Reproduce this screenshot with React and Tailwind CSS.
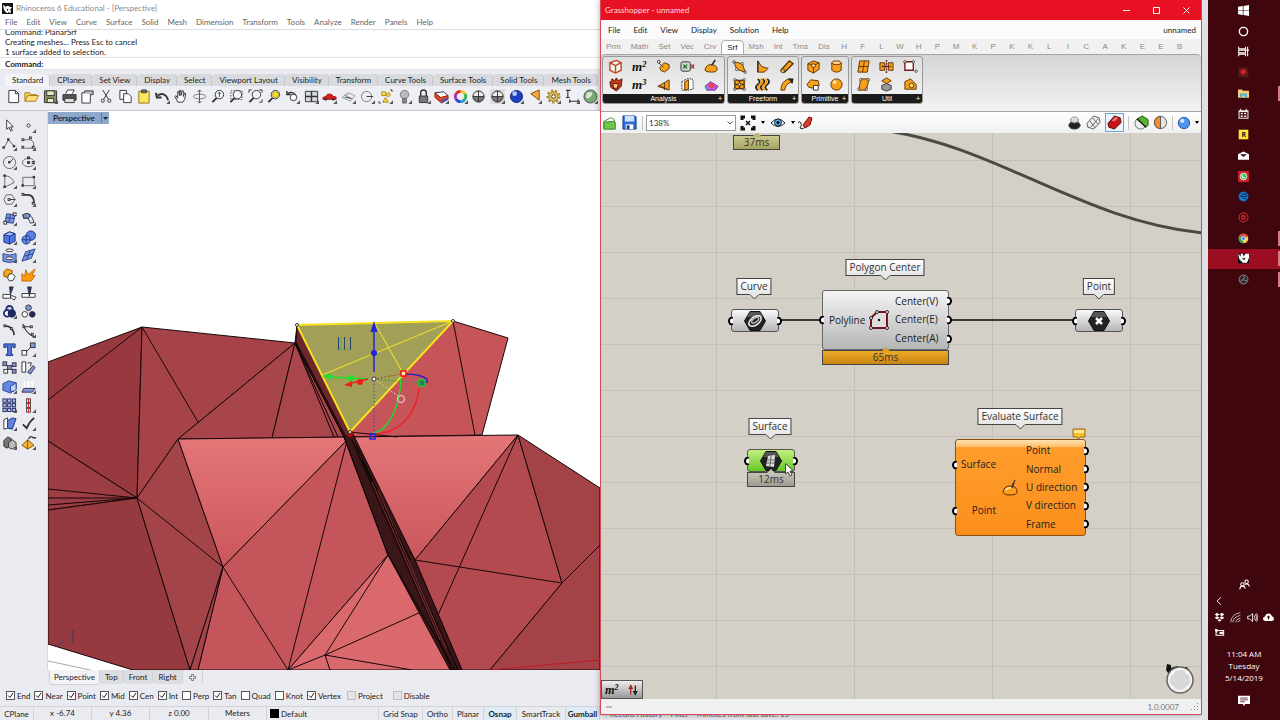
import React from "react";

function Ico({ children, size = "h-4 w-4", corner }) {
  return (
    <svg viewBox="0 0 16 16" className={`${size} shrink-0`} fill="none" stroke="#333" strokeWidth="1" aria-hidden="true">
      {children}
      {corner && <path d="M16 12v4h-4z" fill="#555" stroke="none" />}
    </svg>
  );
}

/* ---------- Rhino data ---------- */

const rhinoMenu = ["File", "Edit", "View", "Curve", "Surface", "Solid", "Mesh", "Dimension", "Transform", "Tools", "Analyze", "Render", "Panels", "Help"];

const rhinoTabs = ["Standard", "CPlanes", "Set View", "Display", "Select", "Viewport Layout", "Visibility", "Transform", "Curve Tools", "Surface Tools", "Solid Tools", "Mesh Tools"];

const lens = (
  <>
    <circle cx="9" cy="6" r="4.500" fill="#f4f6fa" />
    <path d="M6 9.500L1.500 14" strokeWidth="2" />
  </>
);

const standardTools = [
  ["New", <path d="M3 1.500h7l3.500 3.500v9.500H3zM10 1.500V5h3.500" fill="#fff" />],
  ["Open", <><path d="M1 13V4h5l1.500 2H13v2" fill="#f6cf4d" stroke="#a8741a" /><path d="M1 13l3-6h11.500l-3 6z" fill="#ffe07a" stroke="#a8741a" /></>],
  ["Save", <><path d="M1.500 2h13v12.500h-13z" fill="#8e9060" /><path d="M4 2h8v5H4zM4.500 10h7v4.500h-7z" fill="#e8e8c8" /></>, true],
  ["Print", <><path d="M4 5l2-4h7l-2 4" fill="#fff" /><path d="M1 6h14v6H1z" fill="#555" /><path d="M3 10h10v4.500H3z" fill="#ddd" /></>],
  ["Properties", <><path d="M2 4h9v11H2z" fill="#fff" /><path d="M5 4V2h9v4h-3" fill="#bbb" /></>],
  ["Cut", <><path d="M4 1l6 10M11 1L5 11" /><circle cx="4" cy="12.500" r="1.700" /><circle cx="11" cy="12.500" r="1.700" /></>],
  ["Copy", <><path d="M2 1.500h7V11H2z" fill="#fff" /><path d="M6 5h5l3 3v6.500H6z" fill="#fff" /></>],
  ["Paste", <><path d="M3 2.500h11v12.500H3z" fill="#ffe45c" stroke="#8a7614" /><path d="M6 1h5v3H6z" fill="#777" /></>],
  ["Undo", <path d="M14 12C12 5 7 4 3 7M1 4l1 5 5 0" strokeWidth="2" />, true],
  ["Pan", <path d="M5 14L2 8l1-1 2 3V3l1-1 1 5V1.500h1.500V7l1-5h1.500v6l1.500-4 1 1-1 6-2 3z" fill="#fff" />],
  ["Rotate view", <><ellipse cx="8" cy="8" rx="6.500" ry="2.500" stroke="#777" /><path d="M8 1v14M6 3l2-2 2 2M6 13l2 2 2-2" stroke="#555" /></>],
  ["Zoom dynamic", <>{lens}<path d="M9 3.500v5M7.500 5L9 3.500 10.500 5" stroke="#248" /></>],
  ["Zoom window", <><path d="M2 2h12v9H2z" strokeDasharray="1.500 1.500" />{lens}</>],
  ["Zoom extents", <>{lens}<path d="M1 4V1h3M12 1h3v3M15 11v3h-3" /></>],
  ["Zoom selected", <>{lens}<circle cx="9" cy="6" r="3" fill="#ffe11f" stroke="#b59c00" /></>],
  ["Undo view", <><path d="M12 8C10 3 6 3 3 5M2 2v4h4" strokeWidth="1.500" /><circle cx="9" cy="9" r="3.500" fill="#fff" /></>, true],
  ["Four views", <><path d="M1.500 2.500h13v11h-13z" fill="#d6d9dd" /><path d="M8 2.500v11M1.500 8h13" strokeWidth="1.500" /></>, true],
  ["Named view", <><path d="M1 9l3-1 2-2.500h4L12 8l3 .5V11H1z" fill="#d41f1f" stroke="#a51212" /><circle cx="4" cy="11" r="1" fill="#333" /><circle cx="12" cy="11" r="1" fill="#333" /></>, true],
  ["CPlane", <><path d="M1 9l6-5 8 3-5 6zM4 6.500l8 4M8 5l-5 5" stroke="#999" /><path d="M5 9l6 1" /></>, true],
  ["Set CPlane", <><circle cx="7" cy="8" r="5.500" stroke="#777" /><path d="M7 8h7" /></>, true],
  ["Select", <><path d="M4 3h4v4H4z" fill="#ffe34d" stroke="#a98b14" /><circle cx="11" cy="6" r="2" fill="#ffd24a" stroke="#a98b14" /><path d="M5 14l3-5 3 5z" fill="#ffd24a" stroke="#a98b14" /><path d="M1 13v2h2M15 3V1h-2" /></>, true],
  ["Hide", <><circle cx="8" cy="6" r="4.500" fill="#b8bcc0" stroke="#777" /><path d="M6 10h4v5H6z" fill="#888" stroke="#666" /></>, true],
  ["Lock", <><path d="M5 8V4a3 3 0 016 0v4" strokeWidth="1.500" /><path d="M3.500 7.500h9v7h-9z" fill="#777" /></>, true],
  ["Layers", <><path d="M1 4l9-1 5 4-8 3z" fill="#fff" /><path d="M1 4l6 5 8-2v4l-7 4-7-6z" fill="#e2421d" stroke="#8d2812" /><path d="M8 12l7-3v2l-7 4z" fill="#3556c7" stroke="none" /></>, true],
  ["Colors", <g strokeWidth="3"><path d="M8 2.500a5.500 5.500 0 014.800 2.800" stroke="#f2c713" /><path d="M12.800 5.300a5.500 5.500 0 010 5.400" stroke="#31b34a" /><path d="M12.800 10.700A5.500 5.500 0 018 13.500" stroke="#17a5c9" /><path d="M8 13.500a5.500 5.500 0 01-4.800-2.800" stroke="#2b48cf" /><path d="M3.200 10.700a5.500 5.500 0 010-5.400" stroke="#a62bb4" /><path d="M3.200 5.300A5.500 5.500 0 018 2.500" stroke="#e3262b" /></g>, true],
  ["Shade", <><circle cx="8" cy="8" r="6" fill="#777" /><path d="M3 5q5-4 10 0v3H3z" fill="#eee" stroke="none" /><path d="M8 2v12M2 8h12" /></>],
  ["Shade selected", <><path d="M0 0h16v16H0z" fill="#ddd" stroke="none" /><circle cx="8" cy="8" r="6" fill="#777" /><path d="M3 5q5-4 10 0v3H3z" fill="#eee" stroke="none" /><path d="M8 2v12M2 8h12" /></>, true],
  ["Render", <><circle cx="8" cy="8" r="6.500" fill="#1d3fc0" stroke="#14286f" /><circle cx="6" cy="5" r="2.500" fill="#b9cdfb" stroke="none" /></>, true],
  ["Spotlight", <path d="M4 5l9-4v11z" fill="#f7a93b" stroke="#7a4b0c" />, true],
  ["Options", <><circle cx="8" cy="8" r="5" fill="#ecc65a" stroke="#7a5b10" strokeWidth="1" /><circle cx="8" cy="8" r="6.500" stroke="#b48a1e" strokeWidth="2" strokeDasharray="2.500 2" /><circle cx="8" cy="8" r="2" fill="#fff" /></>, true],
  ["Dimension", <path d="M3 1v8M1 1.500h5M1 9h4M5 13h9M5 11v4M14 11v4" strokeWidth="1.200" />, true],
  ["Help", <><circle cx="8" cy="8" r="7" fill="#79a874" stroke="#4d5b4c" /><path d="M4 4l5-1 1 3-4 4-3-1z" fill="#d8e8d5" stroke="none" /></>, true],
];

const box = (x, y, f = "#fff", s = 3) => <rect x={x} y={y} width={s} height={s} fill={f} strokeWidth="1" />;

const sideTools = [
  ["Pointer", <path d="M5 2v10l2.500-2 2 4 1.500-1-2-3.500H12z" fill="#fff" />],
  ["Point", <circle cx="8" cy="8" r="1.700" fill="#fff" />, true],
  ["Polyline", <><path d="M2 13L7 4l6 7" stroke="#666" />{box(1, 11.500, "#333", 1.500)}{box(6, 3, "#333", 1.500)}{box(12, 10, "#333", 1.500)}</>, true],
  ["Curve", <><path d="M3 4h7q5 2 3 9H4" stroke="#666" />{box(1, 3, "#fff", 2)}{box(9, 1, "#fff", 2)}{box(1, 11, "#fff", 2)}{box(12, 11, "#fff", 2)}</>, true],
  ["Circle", <><circle cx="8" cy="8" r="6.500" stroke="#666" /><path d="M8 8l4-4" />{box(7, 7, "#333", 1.500)}</>, true],
  ["Ellipse", <><ellipse cx="8" cy="8" rx="6.500" ry="4.500" stroke="#666" />{box(7, 2, "#fff", 2)}{box(7, 7, "#fff", 2)}{box(12, 7, "#fff", 2)}</>, true],
  ["Arc", <><path d="M3 2v12l10-5Q10 2 3 2" stroke="#666" />{box(2, 1, "#333", 1.500)}{box(2, 13, "#333", 1.500)}</>, true],
  ["Rectangle", <><path d="M2 3.500h12v9H2z" stroke="#666" />{box(1, 11.500, "#333", 1.500)}{box(13, 2.500, "#333", 1.500)}</>, true],
  ["Polygon", <><path d="M4.500 3h6l3.500 5-3.500 5h-6L2 8z" stroke="#666" /><path d="M7 8h7" />{box(6.500, 7, "#fff", 2)}</>, true],
  ["Fillet", <><path d="M2 3h5q7 0 7 9" strokeWidth="1.800" />{box(1, 1.500, "#fff", 2)}{box(12, 11, "#fff", 2)}</>, true],
  ["Surface", <><path d="M5 3l9 1-2 9-9-1z" fill="#7b95dd" stroke="#29458f" /><path d="M4 7l9 1M9 3.500L7.500 12.500" stroke="#29458f" />{box(2, 11)}{box(12, 2)}</>, true],
  ["Sweep", <><path d="M2 4q8-4 12 8l-4 1Q8 6 3 8z" fill="#dfe6fb" /><path d="M2 4q5-3 8 0l-2 4q-2-2-5 0z" fill="#7b95dd" /></>, true],
  ["Box", <><path d="M2 5l6-3 6 2v8l-6 3-6-2z" fill="#4f76e0" stroke="#1d3485" /><path d="M2 5l6 1.500L14 4 8 2z" fill="#a9c0ff" stroke="#1d3485" /><path d="M8 6.500V15" stroke="#1d3485" /></>, true],
  ["Spheres", <><circle cx="10.500" cy="6" r="5" fill="#5b7fdf" stroke="#1d3485" /><circle cx="5.500" cy="10.500" r="4.500" fill="#6f92ee" stroke="#1d3485" /><path d="M1 10.500h9M5.500 6v9" stroke="#1d3485" /></>, true],
  ["Loft", <><ellipse cx="8" cy="2.500" rx="4" ry="1.500" /><path d="M1 6q7 3 14 0v8q-7 3-14 0z" fill="#7796e4" stroke="#29458f" /><ellipse cx="8" cy="11" rx="4" ry="1.500" fill="#fff" /></>, true],
  ["Mesh", <><path d="M5 4l10-3-4 10-10 3z" fill="#7796e4" stroke="#29458f" /><path d="M3 9l10-3M10 2.500L6 12.500" stroke="#29458f" /></>, true],
  ["Join", <><path d="M2 5l3-3 3 1 3 1-1 5-4 2-4-1z" fill="#f8a61c" stroke="#8a5505" /><path d="M7 8l4-1 3 3-2 4-4 1-2-3z" fill="#fff" /></>],
  ["Explode", <path d="M1 15L1 7l3 3 1-7 3 5 7-6-3 7 3 0-4 6z" fill="#f99a0e" stroke="#c26c00" />],
  ["Trim", <><path d="M8 1h4L9 9z" fill="#20398f" /><path d="M1 9h8v4H1zM10 10l5 2-2 3-4-3z" fill="#fff" /></>],
  ["Split", <><path d="M1 8h14v4H1z" fill="#fff" /><path d="M7 1h4L9 11z" fill="#20398f" /></>],
  ["Boolean", <g strokeWidth="1.800" stroke="#20265f"><circle cx="8" cy="5.500" r="3.500" fill="#c6cff3" /><circle cx="5.500" cy="10" r="3.500" fill="#fff" /><circle cx="10.500" cy="10" r="3.500" fill="#20265f" /></g>, true],
  ["Group", <><circle cx="8" cy="4" r="3" fill="#7f95e3" /><circle cx="4" cy="11" r="3" fill="#fff" /><circle cx="12" cy="11" r="3" fill="#20265f" /></>],
  ["Curve edit", <><path d="M3 3q9 0 10 10" strokeWidth="1.800" />{box(2, 2, "#fff", 2)}{box(9, 5, "#fff", 2)}</>],
  ["Points on", <><path d="M2 1q3 10 12 14M3 4h9" strokeWidth="1.200" />{box(2, 3, "#fff", 2)}{box(10, 3, "#fff", 2)}{box(11, 11, "#fff", 2)}</>, true],
  ["Text", <path d="M2 2h12v4h-2L11.500 4.500H10V13h1.500v1.500h-7V13H6V4.500H4.500L4 6H2z" fill="#5175dd" stroke="#1d3485" />],
  ["Move", <><path d="M5 11l6-6" />{box(1, 9, "#fff", 5)}{box(10, 1, "#7f95e3", 5)}</>, true],
  ["Copy objects", <>{box(1, 2, "#7f95e3", 4)}{box(6, 6, "#7f95e3", 4)}{box(11, 3, "#7f95e3", 4)}{box(2, 10, "#fff", 4)}{box(11, 10, "#7f95e3", 4)}</>],
  ["Orient", <><path d="M1 2h4v11H1z" fill="#fff" /><path d="M7 13l6-7 2 2-5 7z" fill="#7f95e3" /><path d="M7 3h4l-1 4" /></>],
  ["Solid edit", <><path d="M1 5l6-3 8 2v7l-6 4-8-3z" fill="#6487e4" stroke="#29458f" /><path d="M9 8l6-4v7l-2 2h-4z" fill="#c8d5fa" stroke="#29458f" /></>, true],
  ["Project", <><path d="M4 2v8M8 2v8M12 2v8" stroke="#fff" strokeWidth="2" /><path d="M3 10h12l-3 4H1z" fill="#7f95e3" /></>, true],
  ["Array", <>{[1, 6, 11].map((a) => [1, 6, 11].map((b) => <rect key={`${a}${b}`} x={a} y={b} width="3.500" height="3.500" fill="#b9c5f5" stroke="#20265f" />))}</>, true],
  ["Align", <>{box(6, 1, "#fff", 4)}{box(6, 6, "#fff", 4)}{box(6, 11, "#fff", 4)}<path d="M8 0v16" stroke="#d22" /></>, true],
  ["Bend", <><path d="M2 4l4-2v11l-4 1z" fill="#fff" /><path d="M6 5l5-3 4 1-4 11-5-1z" fill="#5f80df" stroke="#1d3485" /></>, true],
  ["Check", <path d="M2 9l4 4q3-7 8-11" strokeWidth="2" />, true],
  ["Mesh box", <><path d="M2 6l4-4 4 2v7l-5 3-3-2z" fill="#777" /><path d="M7 8l4-3 4 3v5l-5 2-3-2z" fill="#bbb" /></>, true],
  ["Smooth", <><path d="M1 11l6-6 7 6-7 4z" fill="#f3b43d" stroke="#84560b" /><path d="M7 5v10" stroke="#84560b" /><path d="M8 4q3-4 5-1h3" strokeWidth="1.500" /></>, true],
];

const osnaps = [
  ["End", true], ["Near", true], ["Point", true], ["Mid", true], ["Cen", true], ["Int", true], ["Perp", false],
  ["Tan", true], ["Quad", false], ["Knot", false], ["Vertex", true],
];

function Check({ label, checked, muted }) {
  return (
    <label className="flex items-center gap-[2px]">
      <span className="relative h-[9px] w-[9px]">
        <input
          type="checkbox"
          defaultChecked={checked}
          className={`peer block h-[9px] w-[9px] appearance-none border ${muted ? "border-[#bdbdc2] bg-[#e4e4e6]" : "border-[#555] bg-white"}`}
        />
        <svg viewBox="0 0 9 9" className="pointer-events-none absolute inset-0 hidden peer-checked:block" fill="none" stroke="#222">
          <path d="M2 4.500l2 2 3-4.500" />
        </svg>
      </span>
      {label}
    </label>
  );
}

function Viewport() {
  return (
    <svg viewBox="48 111 552 559" preserveAspectRatio="xMinYMin slice" className="absolute inset-0 h-full w-full" aria-label="Perspective view">
      <defs>
        <linearGradient id="lit" x1="0" y1="0" x2="0" y2="1">
          <stop offset="0" stopColor="#e47678" />
          <stop offset="1" stopColor="#c9565b" />
        </linearGradient>
      </defs>
      <g stroke="#170708" strokeWidth="1" strokeLinejoin="round">
        <path d="M48 362L142 327 137 498 48 441z" fill="#97393e" />
        <path d="M142 327L295 343 178 439 137 498z" fill="#a54348" />
        <path d="M142 327L198 422" fill="none" />
        <path d="M295 343L178 439 272 438z" fill="#a8454a" />
        <path d="M295 343L272 438 350 437z" fill="#a8464b" />
        <path d="M48 400L142 327" />
        <path d="M48 441L137 498 48 510z" fill="#9b3d42" />
        <path d="M453 321L508 338 482 435 350 437V428z" fill="#c6555a" />
        <path d="M453 321L475 435" />
        <path d="M48 510L137 498 190 670 133 670 48 644z" fill="#963a3f" />
        <path d="M137 498L178 439 223 567 190 670z" fill="#a34449" />
        <path d="M137 498L223 567" />
        <path d="M178 439L350 437 223 567z" fill="url(#lit)" />
        <path d="M223 567L350 437 388 555 288 670 198 670z" fill="#c4555a" />
        <path d="M223 567L198 670H190z" fill="#a34449" />
        <path d="M223 567L288 670M348 437L288 670" />
        <path d="M388 555L288 670H456z" fill="#d9696d" />
        <path d="M388 555L325 655M325 655L412 670M325 655L330 670M325 655L288 670M325 655L421 612" fill="none" />
        <path d="M350 437L518 435 415 560z" fill="url(#lit)" />
        <path d="M518 435L415 560 462 670 490 670 562 583z" fill="#b34a4f" />
        <path d="M518 435L600 488V670H490L562 583z" fill="#a34348" />
        <path d="M415 560L562 583 600 545M518 435L438 615" fill="none" />
        <path d="M295 343L344 437 388 555 450 670 462 670 415 560 352 432 297 325z" fill="#3a1618" />
        <path d="M297 325L350 432 346 437 296 342z" fill="#6b272c" />
        <path d="M352 440L452 670M356 445L410 560M362 460L458 670M388 555L455 670M295 343L344 437M295 343L338 437M295 343L334 437M344 437L388 555" fill="none" stroke="#080303" />
        <path d="M372 482L440 640M378 490L446 648" stroke="#7b2d32" />
        <path d="M48 489L137 498M48 498H137M48 505L137 498" fill="none" />
        <path d="M350 432l47 5" />
      </g>
      <path d="M48 661l47 10" stroke="#aaa" />
      <path d="M490 670l110-10" stroke="#c01820" />

      <path d="M297 325L453 321 350 432z" fill="#a29f58" stroke="#f5e21c" strokeWidth="2" />
      <path d="M322 375L453 321M374 322l29 51" stroke="#e8dc2c" strokeWidth="1.200" />
      <path d="M338.500 337v13M344.500 337v13M350.500 337v13" stroke="#27436b" />
      <path d="M341 337v13M339 349.500h12" stroke="#3fae52" strokeWidth="0.500" />
      <g fill="none">
        <path d="M374 380v52" stroke="#3b45a8" strokeDasharray="1.500 2" />
        <path d="M374 379l27-5" stroke="#a33" strokeDasharray="1.500 2" />
        <path d="M374 379l46 4" stroke="#2f9b3a" strokeDasharray="1.500 2" />
        <path d="M374 379l24 17" stroke="#e8dcdc" strokeDasharray="1.500 2" />
        <path d="M374 372v-42" stroke="#2323dd" strokeWidth="1.500" />
        <path d="M330 377l38 2" stroke="#1ee02c" strokeWidth="1.500" />
        <path d="M352 383l16-4" stroke="#e8201e" strokeWidth="1.500" />
        <path d="M401 378C400 408 388 431 373 433" stroke="#25d82e" strokeWidth="1.500" />
        <path d="M419 388C416 418 396 434 373 434" stroke="#ee2226" strokeWidth="1.500" />
        <path d="M403 374q20 0 24 6v3" stroke="#2121c0" strokeWidth="1.500" />
        <circle cx="401" cy="399" r="3.500" stroke="#f2dada" />
        <rect x="370" y="434" width="5" height="5" stroke="#2222e4" strokeWidth="1.500" />
        <rect x="401" y="371" width="5" height="5" stroke="#e11" strokeWidth="1.500" fill="#eea" />
        <rect x="419" y="380" width="6" height="6" stroke="#21c431" strokeWidth="1.500" fill="#276" />
      </g>
      <path d="M374 321l3.500 11h-7z" fill="#2323dd" />
      <path d="M322 376l10-3v7z" fill="#1ee02c" />
      <path d="M344 385l8-4v6z" fill="#e8201e" />
      <circle cx="374" cy="353" r="3" fill="#2323dd" />
      <circle cx="351" cy="378" r="3" fill="#1ee02c" />
      <circle cx="360" cy="382" r="3" fill="#e8201e" />
      <circle cx="350" cy="434" r="3" fill="#a80a10" />
      <g fill="#fff" stroke="#333">
        <circle cx="374" cy="379" r="2" />
        <circle cx="297" cy="325" r="1.500" />
        <circle cx="453" cy="321" r="1.500" />
        <circle cx="350" cy="432" r="1.500" />
      </g>
      <path d="M58 646l5-5M73 630v14" stroke="#27436b" fill="none" />
    </svg>
  );
}

function Rhino() {
  return (
    <section className="flex min-w-0 flex-1 flex-col overflow-hidden bg-[#eaebf0] text-[8px] text-[#222]">
      <header className="flex h-[14px] shrink-0 items-center gap-[3px] bg-white px-[2px] pt-[2px] text-[#8a8a8a]">
        <svg viewBox="0 0 12 12" className="h-[11px] w-[11px]">
          <path d="M0 0h12v12H0z" fill="#111" />
          <path d="M1 2l3 2 2-1 5 2-2 2 1 4-3-1-1 1-2-1-2-3z" fill="#fff" />
          <path d="M5 6l2 1-1 2z" fill="#111" />
        </svg>
        Rhinoceros 6 Educational - [Perspective]
      </header>
      <nav className="flex h-[15px] shrink-0 items-center gap-[9px] bg-white pl-[5px] text-[#666]">
        {rhinoMenu.map((m) => (
          <button key={m}>{m}</button>
        ))}
      </nav>
      <div className="flex h-[28px] shrink-0 flex-col justify-end overflow-hidden border-t border-[#dcdde2] bg-white pl-[5px] leading-[10px] text-[#222]">
        <p>Command: PlanarSrf</p>
        <p>Creating meshes... Press Esc to cancel</p>
        <p>1 surface added to selection.</p>
      </div>
      <label className="flex h-[13px] shrink-0 items-center border-y border-[#e2e3e8] bg-white pl-[5px] font-bold">
        Command:
        <input className="h-full min-w-0 flex-1 bg-transparent pl-1 font-normal outline-none" />
      </label>
      <div className="mt-[3px] flex h-[13px] shrink-0 items-end overflow-hidden pl-[5px]">
        {rhinoTabs.map((t, i) => (
          <button
            key={t}
            className={`h-[12px] shrink-0 rounded-t-[4px] px-[7px] leading-[12px] shadow-[inset_-1px_0_0_#c6c7cd] ${i === 0 ? "bg-[#f4f4f8]" : "bg-[#d9dade]"}`}
          >
            {t}
          </button>
        ))}
      </div>
      <div className="grid h-[25px] shrink-0 grid-cols-[repeat(32,minmax(0,1fr))] place-items-center border-b border-[#c9cad0] bg-[#eeeff4] pb-[3px] pl-1">
        {standardTools.map(([name, art, corner]) => (
          <button key={name} aria-label={name}>
            <Ico size="h-[15px] w-[15px]" corner={corner}>{art}</Ico>
          </button>
        ))}
      </div>
      <div className="flex min-h-0 flex-1">
        <aside className="w-12 shrink-0 border-r border-[#d6d7dc] pt-[5px]">
          <div className="grid h-[336px] w-[38px] auto-rows-fr grid-cols-2 place-items-center">
            {sideTools.map(([name, art, corner]) => (
              <button key={name} aria-label={name}>
                <Ico size="h-[15px] w-[15px]" corner={corner}>{art}</Ico>
              </button>
            ))}
          </div>
        </aside>
        <div className="relative min-w-0 flex-1 overflow-hidden bg-white">
          <Viewport />
          <button className="relative mt-px flex h-[12px] w-[61px] items-center bg-[#8fa9cc] pl-[5px] text-[8px] font-bold text-[#1b2738]">
            Perspective
            <svg viewBox="0 0 8 12" className="ml-auto h-3 w-2">
              <path d="M0 1v10" stroke="#35455c" />
              <path d="M2 5h5L4.500 8z" fill="#1b2738" />
            </svg>
          </button>
        </div>
      </div>
      <div className="flex h-[17px] shrink-0 items-start pl-[49px] text-[8px]">
        <button className="h-[15px] rounded-b-[4px] border-x border-b border-[#cfd0d6] bg-[#f3f3f7] px-[4px]">Perspective</button>
        {["Top", "Front", "Right"].map((t) => (
          <button key={t} className="h-[14px] rounded-b-[4px] border-r border-[#cfd0d6] bg-[#dcdde2] px-[5px]">{t}</button>
        ))}
        <button aria-label="New tab" className="flex h-[15px] w-5 items-center justify-center rounded-b-[4px] border-r border-[#cfd0d6]">
          <svg viewBox="0 0 8 8" className="h-[7px] w-[7px]" fill="#fff" stroke="#666">
            <path d="M3 .5h2V3h2.500v2H5v2.500H3V5H.5V3H3z" />
          </svg>
        </button>
      </div>
      <div className="flex h-[17px] shrink-0 items-center gap-1 whitespace-nowrap pl-[6px]">
        {osnaps.map(([l, on]) => (
          <Check key={l} label={l} checked={on} />
        ))}
        <span className="ml-[2px] flex gap-[10px]">
          <Check label="Project" muted />
          <Check label="Disable" muted />
        </span>
      </div>
      <footer className="mt-[2px] flex h-[14px] shrink-0 items-center overflow-hidden whitespace-nowrap border-t border-[#d3d4da] text-center [&>*]:h-full [&>*]:border-r [&>*]:border-[#d3d4da]">
        <button className="w-[34px]">CPlane</button>
        <span className="w-[58px]">x -6.74</span>
        <span className="w-[58px]">y 4.36</span>
        <span className="w-[59px]">z 0.00</span>
        <span className="w-[58px]">Meters</span>
        <button className="flex min-w-0 flex-1 items-center gap-[2px] pl-[3px]">
          <span className="h-[9px] w-[9px] bg-black" />
          Default
        </button>
        <button className="w-[44px]">Grid Snap</button>
        <button className="w-[30px]">Ortho</button>
        <button className="w-[31px]">Planar</button>
        <button className="w-[33px] bg-[#dcebf6] font-bold">Osnap</button>
        <button className="w-[49px]">SmartTrack</button>
        <button className="w-[34px] bg-[#dcebf6] font-bold">Gumball</button>
      </footer>
    </section>
  );
}

/* ---------- Grasshopper ---------- */

const ghMenu = ["File", "Edit", "View", "Display", "Solution", "Help"];
const ghTabs = ["Prm", "Math", "Set", "Vec", "Crv", "Srf", "Msh", "Int", "Trns", "Dis"];
const ghPlugins = ["H", "F", "L", "W", "H", "P", "M", "K", "P", "K", "K", "L", "I", "C", "A", "K", "E", "E", "B"];

const O = { fill: "#f9a01b", stroke: "#5c3504" };
const dots = (pts) => pts.map(([x, y]) => <circle key={`${x}-${y}`} cx={x} cy={y} r="1.300" fill="#fff" stroke="#222" strokeWidth="0.800" />);
const power = (n) => (
  <text x="0" y="13" fontSize="14" fontWeight="bold" fontStyle="italic" fill="#111" stroke="none" className="font-['Liberation_Serif',serif]">
    m<tspan fontSize="9" dy="-5">{n}</tspan>
  </text>
);

const ghGroups = [
  {
    name: "Analysis",
    cols: "grid-cols-5",
    width: "w-[123px]",
    tools: [
      ["Deconstruct Brep", <><path d="M2 4l7-2.500 5 2.500v8l-6 3-6-3z" fill="#f4f4f4" stroke="#c0461c" strokeWidth="1.500" /><path d="M2 4l6 3 6-3M8 7v8" stroke="#c0461c" strokeWidth="1.500" /></>],
      ["Area", power("2")],
      ["Closest Point", <><path d="M4 9l5-5 5 2v4l-5 4-4-2z" {...O} /><path d="M2 3l6 6" /><circle cx="3" cy="3" r="1.500" fill="#fff" /></>],
      ["Point In Brep", <><rect x="1" y="3" width="10" height="10" rx="2" fill="#c5dac8" /><path d="M3.500 6l4 4M7.500 6l-4 4" stroke="#1d6b2b" strokeWidth="1.500" /><path d="M12 6l3 4M15 6l-3 4" stroke="#b22" strokeWidth="1.300" /></>],
      ["Evaluate Surface", <><path d="M1 12q1-6 6-6 7 0 7 5 0 3-6 3-6 0-7-2z" {...O} /><path d="M8 7l4-6" strokeWidth="1.800" /></>],
      ["Brep Wireframe", <><path d="M2 5l2 0 0-3 3 2 2-3 2 3 4-2-1 8-5 5-6-4z" fill="#c83a18" stroke="#4d1405" /><path d="M5 7h6l-1 5H6z" fill="#f7c08a" stroke="#4d1405" /></>],
      ["Volume", power("3")],
      ["Osculating Circles", <><path d="M2 10L14 3v11z" {...O} /><path d="M3 9l9 4M9 6v8" stroke="#5c3504" /></>],
      ["Is Planar", <><path d="M2 5l5-3h6l1 3v8l-5 1H2z" fill="#fff" strokeDasharray="2 1" /><path d="M5 5l4-2v10l-4 1z" {...O} /></>],
      ["Principal Curvature", <><path d="M1 10l6-5 8 5-3 4H3z" fill="#c15fd4" stroke="#7333a0" /><path d="M4 9l4-3 4 4-4 2z" fill="#ee4058" stroke="none" /><path d="M1 10l4 1-2 3z" fill="#32a7e8" stroke="none" /></>],
    ],
  },
  {
    name: "Freeform",
    cols: "grid-cols-3",
    width: "w-[72px]",
    tools: [
      ["4Point Surface", <><path d="M2 3l9 2 3 9-9-3z" {...O} />{dots([[2, 3], [11, 5], [14, 14], [5, 11]])}</>],
      ["Extrude", <><path d="M3 14V2l4 6 7 2-4 4z" {...O} /><path d="M3 2v12" strokeWidth="1.500" /></>],
      ["Pipe", <><path d="M2 12L11 2l4 3-9 9z" {...O} strokeWidth="1.500" /><circle cx="4" cy="12.500" r="2" fill="#ffb94a" /></>],
      ["Surface From Points", <><path d="M3 3l5 1 5-1v10l-5-1-5 1zM3 8h10M8 3v10" {...O} strokeWidth="1.500" />{dots([[3, 3], [13, 3], [3, 13], [13, 13], [8, 8]])}</>],
      ["Loft", <><path d="M3 2q4 3 0 6t0 6M8 2q4 3 0 6t0 6M13 2q4 3 0 6t0 6" strokeWidth="2" stroke="#222" /><path d="M5.500 2q4 3 0 6t0 6M10.500 2q4 3 0 6t0 6" strokeWidth="2.500" stroke="#f9a01b" /></>],
      ["Sweep1", <><path d="M2 14q0-9 8-12l4 3q-7 2-8 9z" {...O} /><path d="M10 2l5 0-1 5" fill="#222" stroke="#222" /></>],
    ],
  },
  {
    name: "Primitive",
    cols: "grid-cols-2",
    width: "w-[48px]",
    tools: [
      ["Center Box", <><path d="M2 5l6-3 6 2v7l-6 4-6-3z" {...O} /><path d="M2 5l6 2 6-3M8 7v8" stroke="#5c3504" /><circle cx="8" cy="7" r="2" fill="#ffe0a0" stroke="#5c3504" /></>],
      ["Cylinder", <><path d="M3 4v8q5 4 10 0V4z" {...O} /><ellipse cx="8" cy="4" rx="5" ry="2" fill="#ffd48a" stroke="#5c3504" /></>],
      ["Plane Surface", <><path d="M1 8l4-5 8 1 1 5-6 3-5-1z" {...O} /><path d="M8 9h5v5H8z" fill="#fff" /></>],
      ["Sphere", <><circle cx="8" cy="8" r="6" {...O} /><circle cx="6" cy="5.500" r="2" fill="#ffe0a8" stroke="none" /></>],
    ],
  },
  {
    name: "Util",
    cols: "grid-cols-3",
    width: "w-[72px]",
    tools: [
      ["Divide Surface", <><path d="M4 2h10l-2 12H2z" {...O} /><path d="M3 8h10M9 2L7 14" stroke="#5c3504" /></>],
      ["Brep Join", <><path d="M1 4h5v8H1zM10 4h5v8h-5z" {...O} /><path d="M8 1v14M3 8h10" stroke="#5c1004" strokeDasharray="2 1" strokeWidth="1.500" /></>],
      ["Copy Trim", <><path d="M2 3h9v9H2z" fill="#fff" stroke="#801818" strokeWidth="1.500" />{dots([[2, 3], [14, 13], [11, 3]])}</>],
      ["Isotrim", <><path d="M5 2h9l-3 12H3z" {...O} />{dots([[5, 3], [13, 3], [3, 13], [11, 13]])}</>],
      ["Merge Faces", <><path d="M3 9l5-2 5 2v4l-5 2-5-2z" fill="#999" /><path d="M3 4l5-3 5 3-5 3z" {...O} /></>],
      ["Fillet Edge", <><path d="M2 13V5l6-3 6 6v5z" {...O} /><circle cx="9" cy="9" r="2.500" fill="#ffdb5c" stroke="#5c3504" /></>],
    ],
  },
];

function Port({ side }) {
  return (
    <span
      className={`absolute top-1/2 h-[9px] w-[5px] -translate-y-1/2 border-2 border-black bg-white ${
        side === "in" ? "-left-[4px] rounded-l-full border-r-0" : "-right-[4px] rounded-r-full border-l-0"
      }`}
    />
  );
}

function Balloon({ children, place }) {
  return (
    <div className={`absolute flex h-[17px] -translate-x-1/2 items-center whitespace-nowrap border border-[#444] bg-gradient-to-b from-white to-[#e6e6e6] px-[3px] text-[10px] text-[#333] ${place}`}>
      {children}
      <svg viewBox="0 0 12 6" className="absolute left-1/2 top-[15px] h-[6px] w-[12px] -translate-x-1/2">
        <path d="M1 0l5 5 5-5" fill="#e8e8e8" stroke="#444" />
        <path d="M1.500 0h9" stroke="#e8e8e8" strokeWidth="1.500" />
      </svg>
    </div>
  );
}

function Timer({ children, place, color, tip }) {
  return (
    <div className={`absolute flex h-[15px] items-center justify-center border border-[#444] text-[10px] text-[#333] ${place} ${color}`}>
      {children}
      <svg viewBox="0 0 10 5" className={`absolute -top-[4px] left-1/2 h-[5px] w-[10px] -translate-x-1/2 ${tip}`}>
        <path d="M0 5l5-5 5 5z" fill="currentColor" />
      </svg>
    </div>
  );
}

function Param({ place, color, children }) {
  return (
    <div className={`absolute flex h-[23px] w-[48px] items-center justify-center rounded-[3px] border border-[#555] bg-gradient-to-b ${place} ${color}`}>
      <Port side="in" />
      <svg viewBox="0 0 22 20" className="h-[20px] w-[22px]">
        <path d="M6 .5h10L21.500 10 16 19.500H6L.5 10z" fill="#222" stroke="#111" />
        <path d="M6 1h10l3 5H3z" fill="#555" />
        {children}
      </svg>
      <Port side="out" />
    </div>
  );
}

function Canvas() {
  return (
    <main className="relative min-h-0 flex-1 overflow-hidden bg-[#d4d0c8] bg-[linear-gradient(to_right,#c3c0b9_1px,transparent_1px),linear-gradient(to_bottom,#c3c0b9_1px,transparent_1px)] bg-[size:138px_46px] bg-[position:115px_27px] font-['Open_Sans','Noto_Sans',sans-serif] text-[10px] text-[#222]">
      <svg className="absolute left-0 top-0 h-[240px] w-full" fill="none" stroke="#4c4a47">
        <path d="M280-3C395 12 480 88 602 100" strokeWidth="3" />
        <path d="M179 187h40M348 187h125" strokeWidth="2" stroke="#3c3a37" />
      </svg>

      <Timer place="left-[132px] top-[2px] w-[47px]" color="bg-gradient-to-b from-[#cdcb8c] to-[#a5a45f]" tip="text-[#bab974]">37ms</Timer>

      <Balloon place="left-[153px] top-[145px]">Curve</Balloon>
      <Param place="left-[130px] top-[176px]" color="from-[#fafafa] to-[#b5b5b5]">
        <ellipse cx="11" cy="10" rx="7" ry="4" fill="none" stroke="#eee" strokeWidth="1.500" transform="rotate(-35 11 10)" />
        <ellipse cx="11.500" cy="9.500" rx="4" ry="2" fill="none" stroke="#bbb" strokeWidth="1.500" transform="rotate(-35 11 10)" />
      </Param>

      <Balloon place="left-[284px] top-[126px]">Polygon Center</Balloon>
      <div className="absolute left-[221px] top-[157px] flex h-[60px] w-[127px] items-center rounded-[3px] border border-[#666] bg-gradient-to-b from-[#f4f4f4] to-[#b6b6b6]">
        <span className="relative flex h-5 items-center pl-[6px]"><Port side="in" />Polyline</span>
        <svg viewBox="0 0 20 20" className="ml-auto h-5 w-5" fill="#ddd" stroke="#7b1220" strokeWidth="2">
          <path d="M2 8l6-6h10v16H2z" />
          {[[2, 8], [8, 2], [18, 2], [18, 18], [2, 18]].map(([x, y]) => (
            <circle key={`${x}${y}`} cx={x} cy={y} r="1.500" fill="#fff" stroke="#222" strokeWidth="1" />
          ))}
          <circle cx="10" cy="10" r="1.200" fill="#111" stroke="none" />
        </svg>
        <ul className="ml-[6px] grid h-[56px] w-[53px] auto-rows-fr">
          {["V", "E", "A"].map((k) => (
            <li key={k} className="relative flex items-center">Center({k})<Port side="out" /></li>
          ))}
        </ul>
      </div>
      <Timer place="left-[221px] top-[217px] w-[127px]" color="bg-gradient-to-b from-[#eda928] to-[#c98510]" tip="text-[#e0a029]">65ms</Timer>

      <Balloon place="left-[498px] top-[145px]">Point</Balloon>
      <Param place="left-[474px] top-[176px]" color="from-[#fafafa] to-[#b5b5b5]">
        <path d="M8 7l6 6M14 7l-6 6" stroke="#fff" strokeWidth="2.500" />
      </Param>

      <Balloon place="left-[169px] top-[285px]">Surface</Balloon>
      <Param place="left-[146px] top-[316px]" color="from-[#c1f07c] to-[#65c81e]">
        <path d="M8 5l7-1-1 12-8-1z" fill="#ddd" />
        <path d="M7 9h7M7 12h7M11 5l-1 10" stroke="#666" />
      </Param>
      <Timer place="left-[146px] top-[339px] w-[48px]" color="bg-gradient-to-b from-[#c5c3b8] to-[#9d9b90]" tip="text-[#c5c3b8]">12ms</Timer>
      <svg viewBox="0 0 10 14" className="absolute left-[184px] top-[330px] h-[14px] w-[10px]">
        <path d="M.5.5v10.500L3 9l2 4 2-1-2-4h3.500z" fill="#fff" stroke="#444" />
      </svg>

      <Balloon place="left-[419px] top-[275px]">Evaluate Surface</Balloon>
      <svg viewBox="0 0 14 12" className="absolute left-[471px] top-[295px] h-[12px] w-[14px]">
        <path d="M1 1h12v8H8l-1.500 2L5 9H1z" fill="#f6c02d" stroke="#9a6d0d" />
        <path d="M2 2h10v3H2z" fill="#ffe596" />
      </svg>
      <div className="absolute left-[354px] top-[306px] flex h-[97px] w-[131px] items-center rounded-[3px] border border-[#8b5212] bg-[linear-gradient(#ffe3b4,#ffc06a_7%,#ff9c2c_8%,#fb8f1c)]">
        <ul className="w-[40px] text-right">
          <li className="relative flex h-[46px] items-center justify-end"><Port side="in" />Surface</li>
          <li className="relative flex h-[46px] items-center justify-end"><Port side="in" />Point</li>
        </ul>
        <svg viewBox="0 0 16 18" className="ml-[6px] h-[18px] w-4">
          <path d="M1 13q1-6 7-6 7 0 7 6 0 3-7 3-6 0-7-3z" fill="#ff9d1d" stroke="#5e2d00" />
          <path d="M4 11q2-3 5-2" stroke="#ffe9be" fill="none" strokeWidth="1.500" />
          <path d="M10 9l3-8M10 9l1-5" stroke="#333" strokeWidth="1.200" />
        </svg>
        <ul className="ml-auto grid h-[92px] w-[59px] auto-rows-fr whitespace-nowrap">
          {["Point", "Normal", "U direction", "V direction", "Frame"].map((k) => (
            <li key={k} className="relative flex items-center">{k}<Port side="out" /></li>
          ))}
        </ul>
      </div>

      <div className="absolute bottom-0 left-0 flex h-[19px] w-[42px] items-center gap-2 border border-[#555] bg-gradient-to-b from-[#eee] to-[#999] pl-[3px]">
        <Ico size="h-[14px] w-[14px]">{power("2")}</Ico>
        <Ico size="h-[12px] w-[12px]"><path d="M5 14V5M3 6l2-4 2 4z" stroke="#a11" strokeWidth="1.500" /><path d="M11 2v9M9 10l2 4 2-4z" stroke="#111" strokeWidth="1.500" /></Ico>
      </div>
      <svg viewBox="0 0 34 34" className="absolute bottom-[3px] right-[4px] h-[34px] w-[34px]">
        <path d="M4 2l4 1v3l6-2 4 2 6-1 3 5-20 4-4-6z" fill="#111" />
        <circle cx="17" cy="18" r="13" fill="#f1f1f1" stroke="#666" strokeWidth="1.500" />
        <circle cx="17" cy="18" r="10" fill="#d8d8d8" />
        <path d="M8 9l4 1-3 3zM26 9l-4 1 3 3zM8 27l4-1-3-3zM26 27l-4-1 3-3z" fill="#fff" />
      </svg>
    </main>
  );
}

const rule = <span className="h-[14px] w-px bg-[#c4c4c4]" />;
const drop = (
  <svg viewBox="0 0 4 3" className="h-[3px] w-[4px] shrink-0">
    <path d="M0 0h4L2 3z" fill="#000" />
  </svg>
);

function Grasshopper() {
  return (
    <section className="flex w-[602px] shrink-0 flex-col bg-[#eaebf0]">
      <div className="flex min-h-0 flex-1 flex-col border-x border-b border-[#d8485a] bg-[#f5f5f5] text-[8px] shadow-[0_0_6px_rgba(0,0,0,0.35)]">
        <header className="flex h-[20px] shrink-0 items-center bg-[#e81123] pl-1 text-[#ffd9dc]">
          Grasshopper - unnamed
          <span className="ml-auto flex">
            {[["Minimize", "M1 4.500h7"], ["Maximize", "M1.500 1.500h6v6h-6z"], ["Close", "M1.500 1.500l6 6M7.500 1.500l-6 6"]].map(([n, d]) => (
              <button key={n} aria-label={n} className="flex h-5 w-[30px] items-center justify-center">
                <svg viewBox="0 0 9 9" className="h-[9px] w-[9px]" fill="none" stroke="#fff"><path d={d} /></svg>
              </button>
            ))}
          </span>
        </header>
        <nav className="flex h-[19px] shrink-0 items-center gap-[13px] bg-[#fbfbfb] pl-[7px] pr-[5px] text-[#222]">
          {ghMenu.map((m) => (
            <button key={m}>{m}</button>
          ))}
          <span className="ml-auto">unnamed</span>
        </nav>
        <div className="flex h-[15px] shrink-0 items-end bg-[#f1f1f1] pr-[12px] font-['Liberation_Sans',Arial,sans-serif] text-[8px] text-[#8b8b8b]">
          {ghTabs.map((t) => (
            <button
              key={t}
              className={`h-[14px] px-[5px] leading-[14px] ${t === "Srf" ? "rounded-t-[5px] border-x border-t border-[#aaa] bg-white text-[#222]" : ""}`}
            >
              {t}
            </button>
          ))}
          {ghPlugins.map((t, i) => (
            <button key={i} className="h-[14px] flex-1 leading-[14px]">{t}</button>
          ))}
        </div>
        <div className="flex h-[58px] shrink-0 items-start gap-[2px] rounded-t-[4px] border-b border-t border-[#a4a4a4] bg-gradient-to-b from-[#d4d4d4] to-[#f3f3f3] pl-px pt-px">
          {ghGroups.map((g) => (
            <div key={g.name} className={`flex h-[48px] flex-col overflow-hidden rounded-[3px] border border-[#999] bg-gradient-to-b from-[#dedede] to-[#f4f4f4] ${g.width}`}>
              <div className={`grid min-h-0 flex-1 grid-rows-2 place-items-center ${g.cols}`}>
                {g.tools.map(([name, art]) => (
                  <button key={name} aria-label={name}>
                    <Ico size="h-[15px] w-[15px]">{art}</Ico>
                  </button>
                ))}
              </div>
              <div className="relative h-[9px] bg-[#1c1c1c] text-center font-['Liberation_Sans',Arial,sans-serif] text-[7px] leading-[9px] text-white">
                {g.name}
                <span className="absolute right-[2px]">+</span>
              </div>
            </div>
          ))}
        </div>
        <div className="flex h-[21px] shrink-0 items-center gap-[5px] bg-gradient-to-b from-white to-[#f0f0f0] pl-[2px] pr-[2px]">
          <Ico size="h-[14px] w-[14px]"><path d="M1 14V6l8-4 4 2v3" fill="#fff" stroke="#3d8a24" /><path d="M1 15V7l11-1 2 1v8z" fill="#6cc948" stroke="#2b7a18" /></Ico>
          <Ico size="h-[15px] w-[15px]"><path d="M1 1h13l1 1v13H1z" fill="#2c6fd6" stroke="#123d88" /><path d="M3 1h10v6H3z" fill="#cfe0fb" stroke="none" /><path d="M4 10h8v5H4z" fill="#fff" stroke="none" /><path d="M5 11h3v4H5z" fill="#123d88" stroke="none" /></Ico>
          {rule}
          <select aria-label="Zoom" defaultValue="138%" className="-ml-[2px] h-[16px] w-[90px] appearance-none border border-[#999] bg-white px-[2px] leading-[12px] text-[#333]">
            <option>138%</option>
          </select>
          <svg viewBox="0 0 6 4" className="pointer-events-none relative -ml-[14px] h-[4px] w-[6px]" fill="none" stroke="#555"><path d="M.5.5L3 3 5.500.5" /></svg>
          <Ico size="ml-[2px] h-4 w-4"><path d="M2 5V2H5M11 2h3V5M14 11v3H11M5 14H2V11" stroke="#111" strokeWidth="3" /><path d="M6 6l4 4M10 6l-4 4" stroke="#111" strokeWidth="1.500" /></Ico>
          {drop}
          <Ico size="h-4 w-4"><path d="M1 8q7-8 14 0-7 7-14 0z" fill="#fff" stroke="#123" /><circle cx="8" cy="7.500" r="3.500" fill="#58a9dd" stroke="#134" /><circle cx="8" cy="7.500" r="1.500" fill="#000" stroke="none" /></Ico>
          {drop}
          <Ico size="-ml-[3px] h-4 w-4"><path d="M1 8q2-3 3 0t-1 5q4 2 5-2" stroke="#222" /><path d="M6 10l6-8 3 1-2 7-5 3z" fill="#d93a2b" stroke="#7d1111" /></Ico>
          <div className="ml-auto flex items-center gap-1">
            <Ico size="h-[15px] w-[15px]"><ellipse cx="8" cy="11" rx="6" ry="4" fill="#222" /><path d="M4 7V4q4-4 8 0v3q-4 3-8 0z" fill="#ddd" stroke="#888" /></Ico>
            <Ico size="h-[15px] w-[15px]"><path d="M1 9l7-8 6 2 1 5-7 7-6-2z" fill="#eee" stroke="#555" /><path d="M4 6l6 8M7 3l6 7M5 13l8-9" stroke="#666" /></Ico>
            <span className="flex h-[19px] w-[19px] items-center justify-center border border-[#6ba3cf] bg-[#eaf4fc]">
              <Ico size="h-[15px] w-[15px]"><path d="M1 9l7-8 6 2 1 5-7 7-6-2z" fill="#c2161b" stroke="#600" /><path d="M5 6l4-4 3 1-4 4z" fill="#ee7a77" stroke="none" /></Ico>
            </span>
            {rule}
            <Ico size="ml-px h-[15px] w-[15px]"><circle cx="7" cy="9" r="6" fill="#eee" stroke="#666" /><path d="M4 4l5-3 6 4v6l-3 2z" fill="#58b52c" stroke="#234d10" /><path d="M3 4l10 9" stroke="#222" strokeWidth="1.500" /></Ico>
            <Ico size="h-[15px] w-[15px]"><circle cx="8" cy="8" r="6.500" fill="#e6e6e6" stroke="#555" /><path d="M8 1.500a6.500 6.500 0 000 13z" fill="#f0902a" stroke="#555" /></Ico>
            {rule}
            <Ico size="h-[14px] w-[14px]"><circle cx="8" cy="8" r="6.500" fill="#4c94ee" stroke="#1b4d9c" /><circle cx="6" cy="5.500" r="2.500" fill="#cfe3ff" stroke="none" /></Ico>
            {drop}
          </div>
        </div>
        <Canvas />
        <footer className="flex h-[15px] shrink-0 items-center bg-[#f0f0f0] pl-[5px] pr-[2px] text-[#777]">
          <span className="h-[2px] w-[6px] bg-[#bbb]" />
          <span className="ml-auto mr-3">1.0.0007</span>
          <svg viewBox="0 0 8 8" className="h-2 w-2" fill="#999"><path d="M6 0h1v1H6zM6 3h1v1H6zM3 3h1v1H3zM6 6h1v1H6zM3 6h1v1H3zM0 6h1v1H0z" /></svg>
        </footer>
      </div>
      <div className="flex h-[5px] shrink-0 items-end gap-[8px] overflow-hidden whitespace-nowrap pl-[10px] text-[8px] leading-[12px] text-[#555]">
        <span>Record History</span>
        <span>Filter</span>
        <span>Minutes from last save: 15</span>
      </div>
    </section>
  );
}

/* ---------- Taskbar ---------- */

const W = { fill: "#fff", stroke: "none" };

const apps = [
  ["Start", <path d="M0 2.500L7 1.500V7.500H0zM8 1.300L16 0v7.500H8zM0 8.500h7v6L0 13.500zM8 8.500h8V16l-8-1.300z" {...W} />],
  ["Cortana", <circle cx="8" cy="8" r="6" stroke="#fff" strokeWidth="2" />],
  ["Task View", <path d="M1 1v3h10V1M1 15v-3h10v3M1 6h10v4H1zM14 1v14M12 6h4" stroke="#fff" strokeWidth="1.500" />],
  ["Rhino Launcher", <><path d="M1 1h14v14H1z" fill="#5b1a1c" stroke="none" /><path d="M4 5l5-2 3 4-3 4-5-2z" fill="#e01e26" stroke="none" /></>],
  ["Explorer", <><path d="M0 2h6l1 2h9v10H0z" fill="#f4ce71" stroke="none" /><path d="M3 8h10v6h-3v-3H6v3H3z" fill="#46b3d9" stroke="none" /></>],
  ["Calendar", <><path d="M1.500 4h13v11h-13zM1.500 5h13M4 1v3M12 1v3" stroke="#eee" strokeWidth="1.500" /><path d="M4 7h3v2H4zM9 7h3v2H9zM4 11h3v2H4zM9 11h3v2H9z" {...W} /></>],
  ["Revit", <><path d="M1 1h14v14H1z" fill="#fbe73a" stroke="none" /><text x="5" y="12" fontSize="10" fontWeight="bold" fill="#222" stroke="none">R</text></>],
  ["Mail", <><path d="M0 6l8-4 8 4v8H0z" {...W} /><path d="M3 6h10l-5 4z" fill="#40060e" stroke="none" /></>],
  ["WhatsApp", <><path d="M0 0h16v16H0z" fill="#cb1f2e" stroke="none" /><circle cx="8" cy="8" r="5" fill="#45c655" stroke="#fff" /><path d="M6 6q0 4 4 4" stroke="#fff" strokeWidth="1.500" /></>],
  ["Edge", <><circle cx="8" cy="8" r="7" fill="#1d87dc" stroke="#0a3c7c" /><path d="M4 9q1-5 5-5 4 1 3 4H7q0 4 5 3" stroke="#051f46" strokeWidth="1.500" /></>],
  ["Recorder", <><circle cx="8" cy="8" r="6.500" stroke="#dd2a2f" strokeWidth="1.500" /><circle cx="8" cy="8" r="2.500" stroke="#dd2a2f" strokeWidth="2" /></>],
  ["Chrome", <><circle cx="8" cy="8" r="7" fill="#f7cf3b" stroke="none" /><path d="M8 8L2 4.500A7 7 0 0114.500 5z" fill="#df4a37" stroke="none" /><path d="M8 8L2 4.500A7 7 0 007.500 15z" fill="#3aa757" stroke="none" /><circle cx="8" cy="8" r="3" fill="#4c8bf5" stroke="#fff" /></>],
  ["Rhino 6", <><path d="M0 1h16v14H0z" fill="#111" stroke="none" /><path d="M0 1l4 4V1h3l1 4 3-4h5v6l-3 7H7L2 9z" {...W} /><path d="M5 6l3 2 3-2-2 5z" fill="#111" stroke="none" /></>],
  ["OBS", <><circle cx="8" cy="8" r="6.500" fill="#302c30" stroke="#b0a8aa" /><path d="M8 3q3 2 0 5M13 9q-3 2-5-1M4 12q-1-3 4-4" stroke="#b0a8aa" /></>],
];

const running = ["Explorer", "Chrome", "Rhino 6", "OBS"];

function Taskbar() {
  return (
    <aside className="flex w-[72px] shrink-0 flex-col bg-[#40060e] font-['Open_Sans','Noto_Sans',sans-serif] text-[8px] text-white">
      <div className="grid h-[290px] auto-rows-fr">
        {apps.map(([name, art]) => (
          <button key={name} aria-label={name} className={`relative flex items-center justify-center pr-px ${name === "Rhino 6" ? "bg-[#9b0d20]" : ""}`}>
            <Ico size="h-[11px] w-[11px]">{art}</Ico>
            {running.includes(name) && <span className="absolute right-0 h-[15px] w-[2px] bg-[#d67a88]" />}
          </button>
        ))}
      </div>
      <div className="mt-auto flex flex-col pb-[13px]">
        <button aria-label="People" className="flex h-[20px] items-center justify-center">
          <Ico size="h-[11px] w-[11px]"><circle cx="11" cy="4" r="2.500" stroke="#fff" strokeWidth="1.500" /><circle cx="5" cy="8" r="2.500" stroke="#fff" strokeWidth="1.500" /><path d="M1 15q1-5 4-5t4 4M9 8q5-2 6 3" stroke="#fff" strokeWidth="1.500" /></Ico>
        </button>
        <div className="grid grid-cols-4 place-items-center gap-y-[4px] px-[3px]">
          <span className="col-span-4 flex h-[14px] items-center justify-self-start pl-[3px]">
            <Ico size="h-[10px] w-[10px]"><path d="M11 2L5 8l6 6" stroke="#fff" strokeWidth="1.500" /></Ico>
          </span>
          <Ico size="h-[11px] w-[11px]"><path d="M4.500 1L8 3.500 4.500 6 1 3.500zM11.500 1L15 3.500 11.500 6 8 3.500zM4.500 6L8 8.500 4.500 11 1 8.500zM11.500 6L15 8.500 11.500 11 8 8.500zM8 10l3 2-3 2-3-2z" {...W} /></Ico>
          <Ico size="h-[11px] w-[11px]"><path d="M1 15Q2 3 15 1M4 15q1-8 11-10M8 15q1-5 7-6M11 15q1-2 4-3" stroke="#ddd" strokeWidth="1.200" /></Ico>
          <Ico size="h-[11px] w-[11px]"><path d="M1 6h3l4-4v12l-4-4H1zM10 5q2 3 0 6M12 3q4 5 0 10M14 2q4 6 0 12" stroke="#fff" strokeWidth="1.200" /></Ico>
          <Ico size="h-[11px] w-[11px]"><path d="M4 13Q0 13 0 9.500 0 7 3 6.500 4 2 8 2q4 0 5 4 3 1 3 4 0 3-3 3z" {...W} /><path d="M8 11V6M6 8l2-2 2 2" stroke="#40060e" strokeWidth="1.500" /></Ico>
          <Ico size="h-[11px] w-[11px]"><path d="M3 5h11v7H3z" stroke="#fff" strokeWidth="1.500" /><path d="M8 7h5v3H8zM1 3h4v5H3z" {...W} /></Ico>
        </div>
        <div className="mt-[10px] text-center leading-[12px]">
          <p>11:04 AM</p>
          <p>Tuesday</p>
          <p>5/14/2019</p>
        </div>
        <button aria-label="Notifications" className="mt-[11px] flex justify-center">
          <Ico size="h-3 w-3"><path d="M0 1h16v11h-6l-3 3v-3H0z" {...W} /><path d="M3 4h10M3 6.500h10M3 9h6" stroke="#40060e" /></Ico>
        </button>
      </div>
    </aside>
  );
}

export default function App() {
  return (
    <div className="flex h-screen w-full overflow-hidden bg-white font-['Lato','Open_Sans',sans-serif]">
      <Rhino />
      <Grasshopper />
      <div className="w-[6px] shrink-0 bg-[#dfe0e6]" />
      <Taskbar />
    </div>
  );
}
